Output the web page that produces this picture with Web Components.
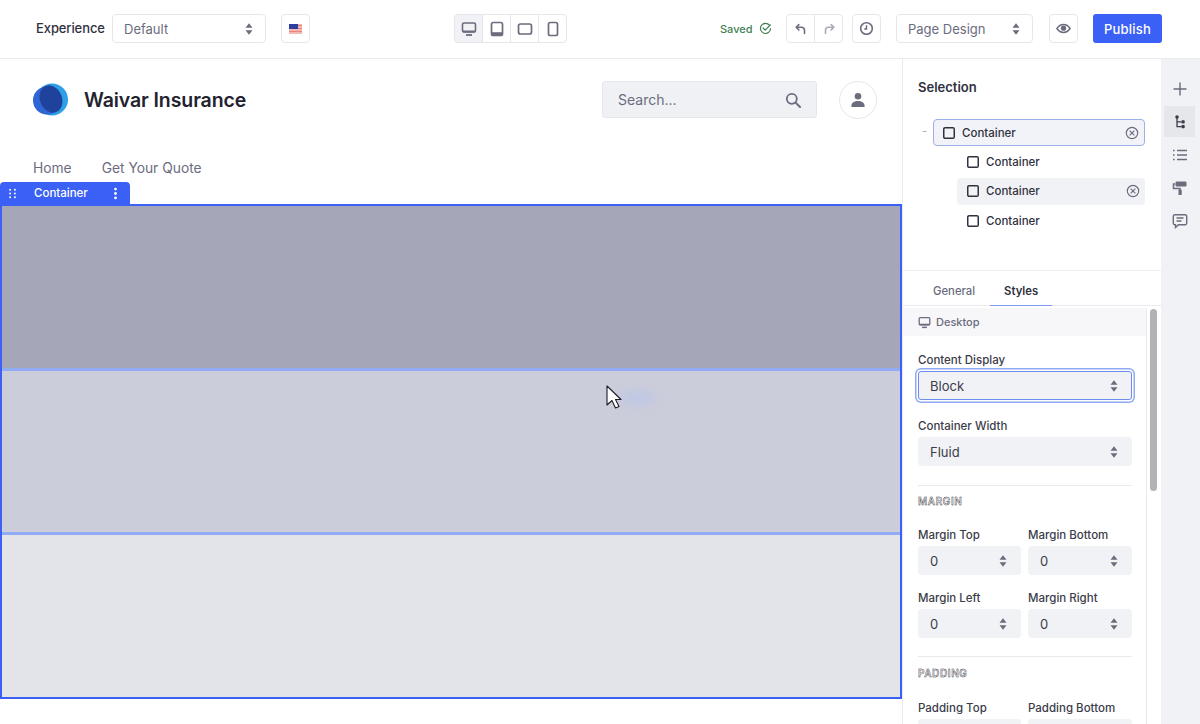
<!DOCTYPE html>
<html lang="en">
<head>
<meta charset="utf-8">
<title>Page Editor</title>
<style>
    html, body { margin: 0; height: 100%; overflow: hidden; background: #fff; }
    body { font-family: Inter, "Liberation Sans", sans-serif; color: #272833; }
</style>
</head>
<body>
<editor-app></editor-app>

<script>
const ICONS = {
    desktop: '<rect x="1.5" y="2" width="13" height="9" rx="1.5" fill="none" stroke="currentColor" stroke-width="1.6"/><path d="M5 14h6" stroke="currentColor" stroke-width="1.8"/><path d="M2 9.5h12v2H2z" fill="currentColor"/>',
    tablet: '<rect x="2.5" y="1.5" width="11" height="13" rx="1.8" fill="none" stroke="currentColor" stroke-width="1.7"/><path d="M3 11.2h10v3H3z" fill="currentColor"/>',
    landscape: '<rect x="1.5" y="3" width="13" height="10" rx="2" fill="none" stroke="currentColor" stroke-width="1.7"/>',
    phone: '<rect x="3.5" y="1.5" width="9" height="13" rx="1.8" fill="none" stroke="currentColor" stroke-width="1.7"/>',
    saved: '<path d="M13 4.2A6.2 6.2 0 1 0 14.2 8" fill="none" stroke="currentColor" stroke-width="1.4" stroke-linecap="round"/><path d="M5 7.4l2.6 2.6L14 3.6" fill="none" stroke="currentColor" stroke-width="1.5" stroke-linecap="round"/>',
    undo: '<path d="M5.5 3L2.500 6l3 3" fill="none" stroke="currentColor" stroke-width="1.8" stroke-linecap="round" stroke-linejoin="round"/><path d="M3 6h5.500a3.500 3.500 0 0 1 3.500 3.500V13" fill="none" stroke="currentColor" stroke-width="1.8" stroke-linecap="round"/>',
    redo: '<path d="M10.500 3l3 3-3 3" fill="none" stroke="currentColor" stroke-width="1.8" stroke-linecap="round" stroke-linejoin="round"/><path d="M13 6H7.500A3.500 3.500 0 0 0 4 9.500V13" fill="none" stroke="currentColor" stroke-width="1.8" stroke-linecap="round"/>',
    history: '<circle cx="8" cy="8" r="6.200" fill="none" stroke="currentColor" stroke-width="1.700"/><path d="M8 4.500V8.600H5.600" fill="none" stroke="currentColor" stroke-width="1.500"/>',
    eye: '<path d="M1 8c1.800-2.800 4.200-4.200 7-4.200S13.200 5.200 15 8c-1.800 2.800-4.200 4.200-7 4.200S2.800 10.800 1 8z" fill="none" stroke="currentColor" stroke-width="1.600"/><circle cx="8" cy="7.600" r="2.800" fill="currentColor"/>',
    search: '<circle cx="6.800" cy="6.800" r="5" fill="none" stroke="currentColor" stroke-width="1.800"/><path d="M10.600 10.600L15 15" stroke="currentColor" stroke-width="2" stroke-linecap="round"/>',
    user: '<circle cx="8" cy="4.300" r="3.300" fill="currentColor"/><path d="M1.500 15c-.4-1 0-3.300 1.500-4.500C4 9.700 5.500 9 8 9s4 .7 5 1.500c1.500 1.200 1.900 3.500 1.500 4.500z" fill="currentColor"/>',
    close: '<circle cx="8" cy="8" r="6.500" fill="none" stroke="currentColor" stroke-width="1.300"/><path d="M5.300 5.300l5.400 5.400M10.700 5.300l-5.400 5.400" stroke="currentColor" stroke-width="1.300"/>',
    box: '<rect x="2" y="2" width="12" height="12" rx="1.500" fill="none" stroke="currentColor" stroke-width="1.700"/>',
    plus: '<path d="M8 1.500v13M1.500 8h13" stroke="currentColor" stroke-width="1.400"/>',
    tree: '<circle cx="5" cy="3" r="1.800" fill="currentColor"/><rect x="9.500" y="6.200" width="3.200" height="3.200" rx=".7" fill="currentColor"/><rect x="9.500" y="11" width="3.200" height="3.200" rx=".7" fill="currentColor"/><path d="M5 4v8.600H9.500M5 7.800H9.500" fill="none" stroke="currentColor" stroke-width="1.300"/>',
    list: '<path d="M5 3.500h10M5 8h10M5 12.500h10" stroke="currentColor" stroke-width="1.300"/><path d="M1 3.500h1.600M1 8h1.600M1 12.500h1.600" stroke="currentColor" stroke-width="1.500"/>',
    paint: '<rect x="3.500" y="1.500" width="11" height="5" rx="1.200" fill="currentColor"/><path d="M3 4H1.500v4.500H8V10" fill="none" stroke="currentColor" stroke-width="1.500"/><rect x="6.500" y="9.500" width="3.200" height="5.500" rx=".6" fill="currentColor"/>',
    comment: '<path d="M2.800 1.800h10.400a1.500 1.500 0 0 1 1.500 1.500v7a1.500 1.500 0 0 1-1.500 1.500H6.500L3.500 14.500v-2.700h-.7a1.500 1.500 0 0 1-1.500-1.500v-7a1.500 1.500 0 0 1 1.500-1.500z" fill="none" stroke="currentColor" stroke-width="1.400"/><path d="M4.500 5h7M4.500 8h5" stroke="currentColor" stroke-width="1.400"/>',
    carets: '<path d="M8 1.500L12 6.500H4zM8 14.500L4 9.500h8z" fill="currentColor"/>',
    dots: '<circle cx="8" cy="2.500" r="1.700" fill="currentColor"/><circle cx="8" cy="8" r="1.700" fill="currentColor"/><circle cx="8" cy="13.500" r="1.700" fill="currentColor"/>',
    grip: '<g fill="currentColor"><circle cx="4.500" cy="2.500" r="1.400"/><circle cx="11.500" cy="2.500" r="1.400"/><circle cx="4.500" cy="8" r="1.400"/><circle cx="11.500" cy="8" r="1.400"/><circle cx="4.500" cy="13.500" r="1.400"/><circle cx="11.500" cy="13.500" r="1.400"/></g>',
};

class UiIcon extends HTMLElement {
    connectedCallback() {
        const size = this.getAttribute("size") || 16;
        this.attachShadow({ mode: "open" });
        this.shadowRoot.innerHTML =
            '<style>:host { display: inline-flex; flex-shrink: 0; } svg { display: block; }</style>' +
            '<svg width="' + size + '" height="' + size + '" viewBox="0 0 16 16">' +
            (ICONS[this.getAttribute("name")] || "") + '</svg>';
    }
}

// bordered square button of the toolbar
class ToolButton extends HTMLElement {
    connectedCallback() {
        this.attachShadow({ mode: "open" });
        this.shadowRoot.innerHTML = `
<style>
    :host {
        display: flex;
        align-items: center;
        justify-content: center;
        width: 29px;
        height: 29px;
        box-sizing: border-box;
        border: 1.5px solid #e6e6ec;
        border-radius: var(--radius, 4px);
        background: #fff;
        color: #6b6c7e;
    }
    :host([active]) { background: #f1f2f5; }
    :host([dim]) { color: #a7a9bc; }
</style>
<slot></slot>`;
    }
}

class SelectBox extends HTMLElement {
    connectedCallback() {
        this.attachShadow({ mode: "open" });
        this.shadowRoot.innerHTML = `
<style>
    :host {
        display: flex;
        align-items: center;
        justify-content: space-between;
        box-sizing: border-box;
        height: 29px;
        padding: 0 9px 0 11px;
        border: 1.5px solid #e6e6ec;
        border-radius: 4px;
        background: #fff;
        color: #6b6c7e;
        font-size: 13px;
    }
    :host([filled]) {
        padding: 0 11px 0 12px;
        border: 0;
        background: #f1f2f5;
        color: #3b3c4a;
    }
    :host([focused]) {
        padding: 0 10px 0 11px;
        border-radius: 3px;
        border: 1px solid #6d8cf0;
        box-shadow: 0 0 0 1.5px #fff, 0 0 0 3px #8fa9f5;
    }
    ui-icon { color: #6b6c7e; }
</style>
<span><slot></slot></span>
<ui-icon name="carets" size="14"></ui-icon>`;
    }
}

const topbarTemplate = document.createElement("template");
topbarTemplate.innerHTML = `
<style>
    :host {
        display: flex;
        align-items: center;
        height: 59px;
        box-sizing: border-box;
        padding: 0 38px 1px 36px;
        border-bottom: 1px solid #e9e9ee;
        background: #fff;
    }
    .label { width: 76px; flex-shrink: 0; font-size: 13px; font-weight: 500; color: #30313f; margin-top: -2px; letter-spacing: -0.1px; }
    .experience { width: 154px; }
    .flag { margin-left: 15px; }
    .devices { display: flex; margin-left: 144px; }
    .devices tool-button { margin-left: -1px; --radius: 0; }
    .devices tool-button:first-child { margin-left: 0; --radius: 4px 0 0 4px; }
    .devices tool-button:last-child { --radius: 0 4px 4px 0; }
    .saved {
        display: flex;
        align-items: center;
        gap: 6px;
        width: 66px;
        margin-left: 153px;
        font-size: 11px;
        font-weight: 500;
        color: #3f7f52;
    }
    .history { display: flex; }
    .history tool-button:first-child { --radius: 4px 0 0 4px; }
    .history tool-button:last-child { margin-left: -1px; --radius: 0 4px 4px 0; }
    .clock { margin-left: 9px; }
    .mode { width: 137px; margin-left: 15px; }
    .eye { margin-left: 16px; }
    .publish {
        display: flex;
        align-items: center;
        justify-content: center;
        width: 69px;
        height: 29px;
        margin-left: 15px;
        border-radius: 3px;
        background: #3a60f5;
        color: #fff;
        font-size: 13px;
        font-weight: 500;
        letter-spacing: 0.2px;
    }
</style>
<span class="label">Experience</span>
<select-box class="experience">Default</select-box>
<tool-button class="flag">
    <svg width="13" height="10" viewBox="0 0 13 10">
        <rect width="13" height="10" fill="#f4b8b4"/>
        <path d="M0 1.500h13M0 4.500h13M0 7.500h13" stroke="#e9817c" stroke-width="1.200"/>
        <rect width="9" height="5" fill="#2c3e9e"/>
    </svg>
</tool-button>
<div class="devices">
    <tool-button active><ui-icon name="desktop" size="16"></ui-icon></tool-button>
    <tool-button><ui-icon name="tablet" size="16"></ui-icon></tool-button>
    <tool-button><ui-icon name="landscape" size="16"></ui-icon></tool-button>
    <tool-button><ui-icon name="phone" size="16"></ui-icon></tool-button>
</div>
<span class="saved">Saved <ui-icon name="saved" size="13"></ui-icon></span>
<div class="history">
    <tool-button><ui-icon name="undo" size="14"></ui-icon></tool-button>
    <tool-button dim><ui-icon name="redo" size="14"></ui-icon></tool-button>
</div>
<tool-button class="clock"><ui-icon name="history" size="15"></ui-icon></tool-button>
<select-box class="mode">Page Design</select-box>
<tool-button class="eye"><ui-icon name="eye" size="15"></ui-icon></tool-button>
<div class="publish">Publish</div>
`;

class EditorTopbar extends HTMLElement {
    constructor() {
        super();
        this.attachShadow({ mode: "open" });
        this.shadowRoot.appendChild(topbarTemplate.content.cloneNode(true));
    }
}

const canvasTemplate = document.createElement("template");
canvasTemplate.innerHTML = `
<style>
    :host { display: block; position: relative; background: #fff; overflow: hidden; }
    .site-head {
        display: flex;
        align-items: center;
        height: 81px;
        padding: 0 25px 0 33px;
    }
    .brand { flex: 1; margin: 1px 0 0 15px; font-size: 19.5px; font-weight: 600; color: #22232e; letter-spacing: -0.1px; }
    .search {
        display: flex;
        align-items: center;
        justify-content: space-between;
        box-sizing: border-box;
        width: 215px;
        height: 37px;
        padding: 0 15px 0 15px;
        border: 1px solid #e6e7ec;
        border-radius: 3px;
        background: #f0f1f5;
        color: #6b6c7e;
        font-size: 14px;
    }
    .avatar {
        display: flex;
        align-items: center;
        justify-content: center;
        box-sizing: border-box;
        width: 38px;
        height: 38px;
        margin-left: 22px;
        border: 1px solid #e6e7ec;
        border-radius: 50%;
        color: #6b6c7e;
    }
    nav { display: flex; gap: 30px; height: 42px; padding: 19px 0 0 33px; box-sizing: border-box; font-size: 13.8px; color: #6b6c7e; line-height: 19px; }
    .tab {
        display: flex;
        align-items: center;
        width: 130px;
        height: 22px;
        box-sizing: border-box;
        padding-left: 7px;
        border-radius: 4px 4px 0 0;
        background: #3a60f5;
        color: #fff;
        font-size: 11.5px;
        font-weight: 500;
    }
    .tab span { margin-left: 16px; flex: 1; }
    .tab ui-icon:last-child { margin-right: 8px; }
    .frame {
        width: 902px;
        box-sizing: border-box;
        border: 2px solid #3a60f5;
    }
    .band.one { background: #a5a7b9; height: 162px; }
    .band.two { background: #cccdda; height: 161px; border-top: 3px solid #92abf5; border-bottom: 3px solid #92abf5; }
    .band.three { background: #e3e4ea; height: 162px; }
    .smudge {
        position: absolute;
        left: 620px;
        top: 331px;
        width: 36px;
        height: 16px;
        border-radius: 50%;
        background: #c0c8e4;
        filter: blur(4px);
    }
    .cursor { position: absolute; left: 605px; top: 326px; }
</style>
<div class="site-head">
    <svg width="36" height="34" viewBox="0 0 36 34">
        <circle cx="19" cy="16.500" r="16" fill="#2f9fe8"/>
        <circle cx="14" cy="17.500" r="14" fill="#2e66d4"/>
        <ellipse cx="18" cy="16" rx="11" ry="14" transform="rotate(-22 18 16)" fill="#1f439c"/>
    </svg>
    <div class="brand">Waivar Insurance</div>
    <div class="search">Search... <ui-icon name="search" size="16"></ui-icon></div>
    <div class="avatar"><ui-icon name="user" size="16"></ui-icon></div>
</div>
<nav><span>Home</span><span>Get Your Quote</span></nav>
<div class="tab"><ui-icon name="grip" size="11"></ui-icon><span>Container</span><ui-icon name="dots" size="13"></ui-icon></div>
<div class="frame">
    <div class="band one"></div>
    <div class="band two"></div>
    <div class="band three"></div>
</div>
<div class="smudge"></div>
<svg class="cursor" width="18" height="26" viewBox="0 0 18 26">
    <path d="M2 1v19l5-4.500 3.500 7.500 3.500-1.500L10.500 14.500H16z" fill="#fff" stroke="#1c1c24" stroke-width="1.100" stroke-linejoin="round"/>
</svg>
`;

class PageCanvas extends HTMLElement {
    constructor() {
        super();
        this.attachShadow({ mode: "open" });
        this.shadowRoot.appendChild(canvasTemplate.content.cloneNode(true));
    }
}

class TreeRow extends HTMLElement {
    connectedCallback() {
        this.attachShadow({ mode: "open" });
        const removable = this.hasAttribute("removable");
        this.shadowRoot.innerHTML = `
<style>
    :host {
        display: flex;
        align-items: center;
        box-sizing: border-box;
        height: 27px;
        padding: 0 5px 0 9px;
        border-radius: 4px;
        color: #30313f;
        font-size: 11.5px;
        font-weight: 500;
    }
    :host([hovered]) { background: #f1f2f5; }
    :host([selected]) {
        background: #f1f3f8;
        border: 1px solid #9db0ea;
        padding-left: 8px;
    }
    span { flex: 1; margin-left: 6px; }
    .remove { color: #6b6c7e; }
</style>
<ui-icon name="box" size="14"></ui-icon>
<span><slot></slot></span>
${removable ? '<ui-icon class="remove" name="close" size="14"></ui-icon>' : ""}`;
    }
}

// label above a select
class FormField extends HTMLElement {
    connectedCallback() {
        this.attachShadow({ mode: "open" });
        this.shadowRoot.innerHTML = `
<style>
    :host { display: block; }
    label { display: block; height: 15px; margin-bottom: 3px; font-size: 11.5px; line-height: 15px; font-weight: 500; color: #3b3c4a; white-space: nowrap; }
</style>
<label>${this.getAttribute("label")}</label>
<slot></slot>`;
    }
}

const panelTemplate = document.createElement("template");
panelTemplate.innerHTML = `
<style>
    :host {
        display: flex;
        flex-direction: column;
        box-sizing: border-box;
        border-left: 1px solid #e9e9ee;
        background: #fff;
        overflow: hidden;
        height: 100%;
    }
    .selection { height: 212px; flex-shrink: 0; box-sizing: border-box; padding: 20px 16px 0 15px; border-bottom: 1px solid #eeeef2; }
    h2 { margin: 0 0 23px; font-size: 13px; line-height: 17px; font-weight: 600; color: #30313f; }
    .tree { display: flex; flex-direction: column; width: 212px; margin-left: 15px; gap: 2.400px; position: relative; }
    .tree tree-row:not([selected]) { margin-left: 24px; }
    .collapse { position: absolute; left: -11px; top: 5px; font-size: 11px; color: #a7a9bc; }
    .tabs {
        display: flex;
        height: 35px;
        flex-shrink: 0;
        box-sizing: border-box;
        padding-left: 15px;
        border-bottom: 1px solid #e9e9ee;
        font-size: 11.300px;
        font-weight: 500;
        color: #6b6c7e;
    }
    .tabs div { display: flex; align-items: center; padding: 6px 15px 0; }
    .tabs .on { color: #30313f; border-bottom: 1.500px solid #7d9bf5; margin-bottom: -1px; font-weight: 600; padding: 6px 14px 0 14px; }
    .body { display: flex; flex: 1; min-height: 0; }
    .scroll { width: 244px; flex-shrink: 0; margin-top: 2px; border-right: 1px solid #e9e9ee; box-sizing: border-box; }
    .strip {
        display: flex;
        align-items: center;
        gap: 5px;
        height: 28px;
        padding-left: 15px;
        background: #f7f7f9;
        color: #6b6c7e;
        font-size: 11px;
        font-weight: 500;
    }
    .form { padding: 17px 14px 0 15px; display: flex; flex-direction: column; }
    hr { width: 100%; border: 0; border-top: 1px solid #e9e9ee; margin: 0; }
    .heading {
        font-size: 10px;
        line-height: 12px;
        font-weight: 600;
        letter-spacing: 0.6px;
        color: #f4f4f4;
        -webkit-text-stroke: 0.4px #2c2c35;
        margin: 9px 0 21px;
    }
    .pair { display: grid; grid-template-columns: 103px 104px; gap: 0 7px; margin-bottom: 16px; }
    .scrollbar { width: 7px; height: 182px; margin: 3px 0 0 3px; border-radius: 4px; background: #b2b2b6; }
</style>
<div class="selection">
    <h2>Selection</h2>
    <div class="tree">
        <span class="collapse">-</span>
        <tree-row selected removable>Container</tree-row>
        <tree-row>Container</tree-row>
        <tree-row hovered removable>Container</tree-row>
        <tree-row>Container</tree-row>
    </div>
</div>
<div class="tabs"><div>General</div><div class="on">Styles</div></div>
<div class="body">
    <div class="scroll">
        <div class="strip"><ui-icon name="desktop" size="13"></ui-icon>Desktop</div>
        <div class="form">
            <form-field label="Content Display"><select-box filled focused>Block</select-box></form-field>
            <form-field label="Container Width" style="margin-top:19px"><select-box filled>Fluid</select-box></form-field>
            <hr style="margin-top:19px">
            <div class="heading">MARGIN</div>
            <div class="pair">
                <form-field label="Margin Top"><select-box filled>0</select-box></form-field>
                <form-field label="Margin Bottom"><select-box filled>0</select-box></form-field>
            </div>
            <div class="pair">
                <form-field label="Margin Left"><select-box filled>0</select-box></form-field>
                <form-field label="Margin Right"><select-box filled>0</select-box></form-field>
            </div>
            <hr style="margin-top:2px">
            <div class="heading" style="margin:10px 0 22px">PADDING</div>
            <div class="pair">
                <form-field label="Padding Top"><select-box filled></select-box></form-field>
                <form-field label="Padding Bottom"><select-box filled></select-box></form-field>
            </div>
        </div>
    </div>
    <div class="scrollbar"></div>
</div>
`;

class SidePanel extends HTMLElement {
    constructor() {
        super();
        this.attachShadow({ mode: "open" });
        this.shadowRoot.appendChild(panelTemplate.content.cloneNode(true));
    }
}

class SideRail extends HTMLElement {
    connectedCallback() {
        this.attachShadow({ mode: "open" });
        const items = ["plus", "tree", "list", "paint", "comment"];
        this.shadowRoot.innerHTML = `
<style>
    :host {
        display: flex;
        flex-direction: column;
        align-items: center;
        gap: 2px;
        padding: 14px 2px 0 0;
        background: #f1f2f6;
        color: #6b6c7e;
    }
    div { display: flex; align-items: center; justify-content: center; width: 31px; height: 31px; }
    .on { background: #e6e7eb; color: #3b3c4a; }
</style>
${items.map((n) => '<div class="' + (n === "tree" ? "on" : "") + '"><ui-icon name="' + n + '" size="16"></ui-icon></div>').join("")}`;
    }
}

const appTemplate = document.createElement("template");
appTemplate.innerHTML = `
<style>
    :host { display: flex; flex-direction: column; height: 724px; overflow: hidden; }
    .work { display: grid; grid-template-columns: 902px 259px 39px; flex: 1; min-height: 0; }
</style>
<editor-topbar></editor-topbar>
<div class="work">
    <page-canvas></page-canvas>
    <side-panel></side-panel>
    <side-rail></side-rail>
</div>
`;

class EditorApp extends HTMLElement {
    constructor() {
        super();
        this.attachShadow({ mode: "open" });
        this.shadowRoot.appendChild(appTemplate.content.cloneNode(true));
    }
}

customElements.define("ui-icon", UiIcon);
customElements.define("tool-button", ToolButton);
customElements.define("select-box", SelectBox);
customElements.define("editor-topbar", EditorTopbar);
customElements.define("page-canvas", PageCanvas);
customElements.define("tree-row", TreeRow);
customElements.define("form-field", FormField);
customElements.define("side-panel", SidePanel);
customElements.define("side-rail", SideRail);
customElements.define("editor-app", EditorApp);
</script>
</body>
</html>
